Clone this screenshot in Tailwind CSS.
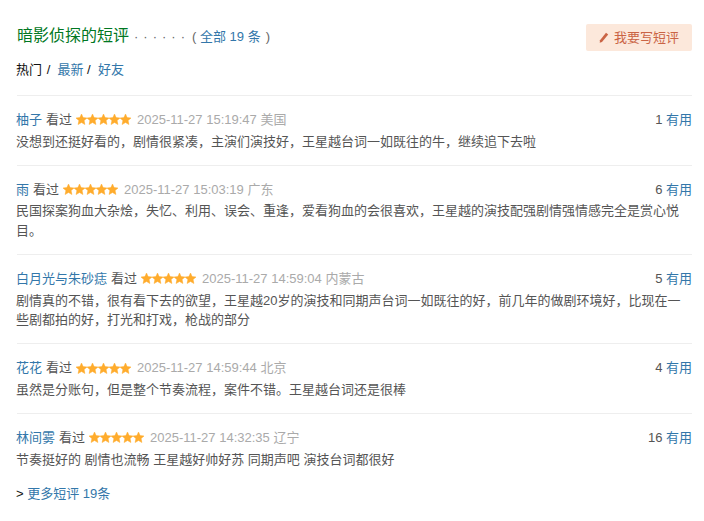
<!DOCTYPE html>
<html lang="zh">
  <head>
    <meta charset="UTF-8" />
    <title>暗影侦探的短评</title>
    <script src="https://cdn.jsdelivr.net/npm/@tailwindcss/browser@4"></script>
  </head>
  <body class="bg-white text-[13px] leading-[19.5px] text-[#555] font-['Liberation_Sans','Noto_Sans_CJK_SC',sans-serif]">
    <svg class="hidden">
      <symbol id="star" viewBox="0 0 11 11">
        <path fill="#ffac2d" stroke="#ffac2d" stroke-width="0.5" stroke-linejoin="round" d="M5.5 0 7.1 3.6 11 4 8.1 6.6 8.9 10.5 5.5 8.5 2.1 10.5 2.9 6.6 0 4 3.9 3.6Z" />
      </symbol>
    </svg>

    <div class="w-[675px] ml-[17px] pt-[24px]">
      <div class="flex justify-between items-start h-[26px]">
        <h2 class="mt-[1px] text-[16px] leading-[22px] text-[#072] font-normal">
          暗影侦探的短评<span class="text-[13px] text-[#666] ml-[5px] tracking-[5px]">······</span><span class="text-[13px] text-[#666] ml-[2px]">( <a class="text-[#37a]">全部 19 条</a><span class="ml-[5px]">)</span></span>
        </h2>
        <a class="flex items-center justify-center gap-[5px] w-[106px] h-[27px] rounded-[2px] bg-[#fce8db] text-[#ca6445]">
          <svg width="10" height="11" viewBox="0 0 10 11"><path fill="#ca6445" d="M7 .8 9.2 2.6 3 10 .7 10.8 1 8.3Z" /></svg>
          我要写短评
        </a>
      </div>

      <div class="mt-[10px] -ml-px h-[20px] text-[#111]">
        热门<span class="ml-px"> / </span>&nbsp;<a class="text-[#37a]">最新</a> / &nbsp;<a class="text-[#37a]">好友</a>
      </div>

      <div class="mt-[15px]">
        <div class="border-t border-[#eee] pt-[14px] pb-[13.75px]">
          <div class="flex justify-between -ml-px">
            <div class="flex items-center">
              <a class="text-[#37a]">柚子</a><span class="ml-[4px]">看过</span>
              <svg class="ml-[4px]" width="56" height="11"><use href="#star" width="11" height="11" /><use href="#star" x="11" width="11" height="11" /><use href="#star" x="22" width="11" height="11" /><use href="#star" x="33" width="11" height="11" /><use href="#star" x="44" width="11" height="11" /></svg>
              <span class="ml-[5px] text-[#aaa]">2025-11-27 15:19:47 美国</span>
            </div>
            <div>1 <a class="text-[#37a]">有用</a></div>
          </div>
          <p class="mt-[2px] -ml-px">没想到还挺好看的，剧情很紧凑，主演们演技好，王星越台词一如既往的牛，继续追下去啦</p>
        </div>

        <div class="border-t border-[#eee] pt-[14px] pb-[13.75px]">
          <div class="flex justify-between -ml-px">
            <div class="flex items-center">
              <a class="text-[#37a]">雨</a><span class="ml-[4px]">看过</span>
              <svg class="ml-[4px]" width="56" height="11"><use href="#star" width="11" height="11" /><use href="#star" x="11" width="11" height="11" /><use href="#star" x="22" width="11" height="11" /><use href="#star" x="33" width="11" height="11" /><use href="#star" x="44" width="11" height="11" /></svg>
              <span class="ml-[5px] text-[#aaa]">2025-11-27 15:03:19 广东</span>
            </div>
            <div>6 <a class="text-[#37a]">有用</a></div>
          </div>
          <p class="mt-[2px] -ml-px">民国探案狗血大杂烩，失忆、利用、误会、重逢，爱看狗血的会很喜欢，王星越的演技配强剧情强情感完全是赏心悦目。</p>
        </div>

        <div class="border-t border-[#eee] pt-[14px] pb-[13.75px]">
          <div class="flex justify-between -ml-px">
            <div class="flex items-center">
              <a class="text-[#37a]">白月光与朱砂痣</a><span class="ml-[4px]">看过</span>
              <svg class="ml-[4px]" width="56" height="11"><use href="#star" width="11" height="11" /><use href="#star" x="11" width="11" height="11" /><use href="#star" x="22" width="11" height="11" /><use href="#star" x="33" width="11" height="11" /><use href="#star" x="44" width="11" height="11" /></svg>
              <span class="ml-[5px] text-[#aaa]">2025-11-27 14:59:04 内蒙古</span>
            </div>
            <div>5 <a class="text-[#37a]">有用</a></div>
          </div>
          <p class="mt-[2px] -ml-px">剧情真的不错，很有看下去的欲望，王星越20岁的演技和同期声台词一如既往的好，前几年的做剧环境好，比现在一些剧都拍的好，打光和打戏，枪战的部分</p>
        </div>

        <div class="border-t border-[#eee] pt-[14px] pb-[13.75px]">
          <div class="flex justify-between -ml-px">
            <div class="flex items-center">
              <a class="text-[#37a]">花花</a><span class="ml-[4px]">看过</span>
              <svg class="ml-[4px]" width="56" height="11"><use href="#star" width="11" height="11" /><use href="#star" x="11" width="11" height="11" /><use href="#star" x="22" width="11" height="11" /><use href="#star" x="33" width="11" height="11" /><use href="#star" x="44" width="11" height="11" /></svg>
              <span class="ml-[5px] text-[#aaa]">2025-11-27 14:59:44 北京</span>
            </div>
            <div>4 <a class="text-[#37a]">有用</a></div>
          </div>
          <p class="mt-[2px] -ml-px">虽然是分账句，但是整个节奏流程，案件不错。王星越台词还是很棒</p>
        </div>

        <div class="border-t border-[#eee] pt-[14px]">
          <div class="flex justify-between -ml-px">
            <div class="flex items-center">
              <a class="text-[#37a]">林间雾</a><span class="ml-[4px]">看过</span>
              <svg class="ml-[4px]" width="56" height="11"><use href="#star" width="11" height="11" /><use href="#star" x="11" width="11" height="11" /><use href="#star" x="22" width="11" height="11" /><use href="#star" x="33" width="11" height="11" /><use href="#star" x="44" width="11" height="11" /></svg>
              <span class="ml-[5px] text-[#aaa]">2025-11-27 14:32:35 辽宁</span>
            </div>
            <div>16 <a class="text-[#37a]">有用</a></div>
          </div>
          <p class="mt-[2px] -ml-px">节奏挺好的 剧情也流畅 王星越好帅好苏 同期声吧 演技台词都很好</p>
        </div>
      </div>

      <div class="mt-[15px] -ml-px text-[#111]">&gt; <a class="text-[#37a]">更多短评 19条</a></div>
    </div>
  </body>
</html>
